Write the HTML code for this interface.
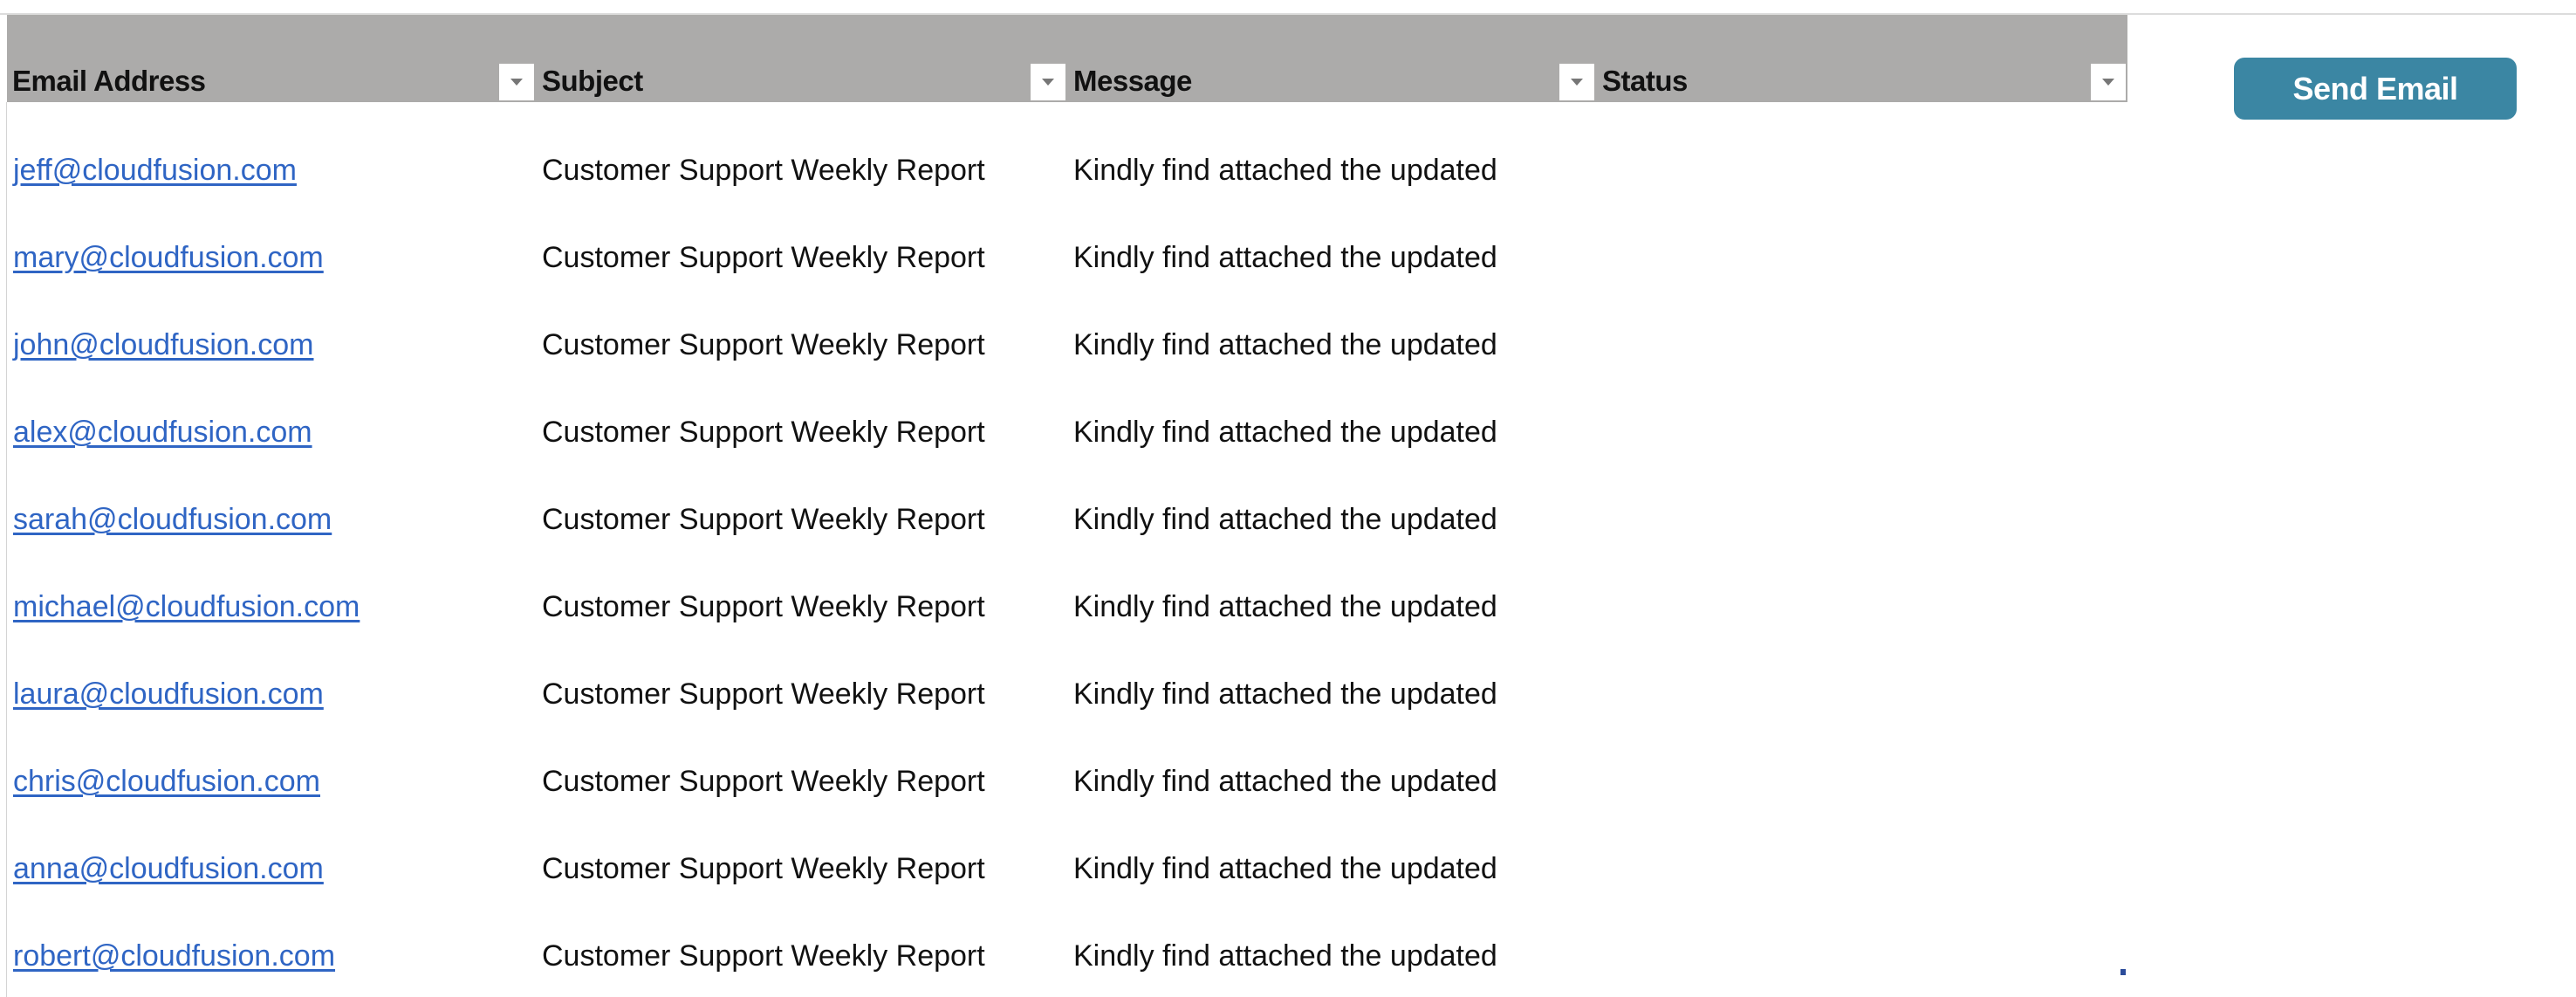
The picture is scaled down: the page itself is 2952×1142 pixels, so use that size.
<!DOCTYPE html>
<html><head><style>
html,body{margin:0;padding:0;width:2952px;height:1142px;background:#fff;overflow:hidden;position:relative;font-family:"Liberation Sans",sans-serif;}
.topline{position:absolute;left:0;top:15px;width:2952px;height:2px;background:#dcdcdc;}
.leftline{position:absolute;left:7px;top:117px;width:1px;height:1025px;background:#d4d4d4;}
.hdr{position:absolute;left:8px;top:17px;width:2430px;height:100px;background:#acabaa;}
.h{position:absolute;top:74px;font-weight:bold;font-size:33px;color:#111;letter-spacing:-0.5px;}
.dd{position:absolute;top:73px;width:40px;height:42px;background:#fff;}
.dd:after{content:"";position:absolute;left:13px;top:17px;border-left:7px solid transparent;border-right:7px solid transparent;border-top:8px solid #777;}
.btn{position:absolute;left:2560px;top:66px;width:324px;height:71px;background:#3b86a3;border-radius:12px;color:#fff;font-weight:bold;font-size:36px;text-align:center;line-height:71px;letter-spacing:-0.5px;}
.r{position:absolute;font-size:34px;color:#111;white-space:nowrap;letter-spacing:0px;}
.e{color:#2f65c4;text-decoration:underline;text-underline-offset:4px;}
.mark{position:absolute;left:2430px;top:1110px;width:6px;height:7px;background:#2b4c9a;}
</style></head><body>
<div class="topline"></div>
<div class="hdr"></div>
<div class="leftline"></div>
<div class="h" style="left:14px">Email Address</div>
<div class="dd" style="left:572px"></div>
<div class="h" style="left:621px">Subject</div>
<div class="dd" style="left:1181px"></div>
<div class="h" style="left:1230px">Message</div>
<div class="dd" style="left:1787px"></div>
<div class="h" style="left:1836px">Status</div>
<div class="dd" style="left:2396px"></div>
<div class="btn">Send Email</div>

<div class="r e" style="left:15px;top:176px">jeff@cloudfusion.com</div>
<div class="r" style="left:621px;top:176px">Customer Support Weekly Report</div>
<div class="r" style="left:1230px;top:176px">Kindly find attached the updated</div>

<div class="r e" style="left:15px;top:276px">mary@cloudfusion.com</div>
<div class="r" style="left:621px;top:276px">Customer Support Weekly Report</div>
<div class="r" style="left:1230px;top:276px">Kindly find attached the updated</div>

<div class="r e" style="left:15px;top:376px">john@cloudfusion.com</div>
<div class="r" style="left:621px;top:376px">Customer Support Weekly Report</div>
<div class="r" style="left:1230px;top:376px">Kindly find attached the updated</div>

<div class="r e" style="left:15px;top:476px">alex@cloudfusion.com</div>
<div class="r" style="left:621px;top:476px">Customer Support Weekly Report</div>
<div class="r" style="left:1230px;top:476px">Kindly find attached the updated</div>

<div class="r e" style="left:15px;top:576px">sarah@cloudfusion.com</div>
<div class="r" style="left:621px;top:576px">Customer Support Weekly Report</div>
<div class="r" style="left:1230px;top:576px">Kindly find attached the updated</div>

<div class="r e" style="left:15px;top:676px">michael@cloudfusion.com</div>
<div class="r" style="left:621px;top:676px">Customer Support Weekly Report</div>
<div class="r" style="left:1230px;top:676px">Kindly find attached the updated</div>

<div class="r e" style="left:15px;top:776px">laura@cloudfusion.com</div>
<div class="r" style="left:621px;top:776px">Customer Support Weekly Report</div>
<div class="r" style="left:1230px;top:776px">Kindly find attached the updated</div>

<div class="r e" style="left:15px;top:876px">chris@cloudfusion.com</div>
<div class="r" style="left:621px;top:876px">Customer Support Weekly Report</div>
<div class="r" style="left:1230px;top:876px">Kindly find attached the updated</div>

<div class="r e" style="left:15px;top:976px">anna@cloudfusion.com</div>
<div class="r" style="left:621px;top:976px">Customer Support Weekly Report</div>
<div class="r" style="left:1230px;top:976px">Kindly find attached the updated</div>

<div class="r e" style="left:15px;top:1076px">robert@cloudfusion.com</div>
<div class="r" style="left:621px;top:1076px">Customer Support Weekly Report</div>
<div class="r" style="left:1230px;top:1076px">Kindly find attached the updated</div>

<div class="mark"></div>
</body></html>
